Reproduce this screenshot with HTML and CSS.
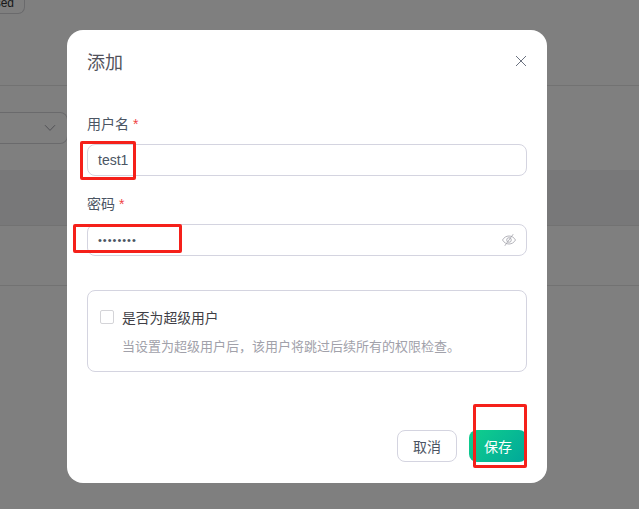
FILE: index.html
```html
<!DOCTYPE html>
<html lang="zh-CN">
<head>
    <meta charset="UTF-8">
    <title>添加</title>
    <link rel="stylesheet" href="styles.css">
</head>
<body>
    <div class="page">
        <div class="top-bar">
            <span class="tag">used</span>
        </div>
        <div class="filter-row">
            <div class="select">
                <svg class="select-arrow" viewBox="0 0 12 8"><path d="M1 1.2l5 5.2 5-5.2"/></svg>
            </div>
        </div>
        <div class="table-head"></div>
        <div class="table-row"></div>
    </div>

    <div class="overlay"></div>

    <div class="modal">
        <div class="modal-header">
            <h2 class="modal-title">添加</h2>
            <svg class="modal-close" viewBox="0 0 12 12"><path d="M1 1l10 10M11 1L1 11"/></svg>
        </div>

        <div class="form-group">
            <label class="form-label">用户名 <span class="required">*</span></label>
            <div class="input">test1</div>
        </div>
        <div class="form-group">
            <label class="form-label">密码 <span class="required">*</span></label>
            <div class="input">
                <span class="password">••••••••</span>
                <svg class="eye" viewBox="0 0 16 14">
                    <path d="M1.5 7C3 4.4 5.3 3 8 3s5 1.4 6.500 4C13 9.600 10.700 11 8 11S3 9.600 1.500 7z"/>
                    <circle cx="8" cy="7" r="2.300"/>
                    <path d="M12.200 1.200L3.800 12.800"/>
                </svg>
            </div>
        </div>

        <div class="super-box">
            <div class="super-row">
                <span class="checkbox"></span>
                <span class="super-title">是否为超级用户</span>
            </div>
            <p class="super-desc">当设置为超级用户后，该用户将跳过后续所有的权限检查。</p>
        </div>

        <div class="modal-footer">
            <a href="#" class="btn">取消</a>
            <a href="#" class="btn btn-save">保存</a>
        </div>
    </div>

    <div class="mark mark-name"></div>
    <div class="mark mark-password"></div>
    <div class="mark mark-save"></div>
</body>
</html>
```

FILE: styles.css
```css
* {
    box-sizing: border-box;
}

html, body {
    height: 100%;
}

body {
    margin: 0;
    overflow: hidden;
    font-family: "Liberation Sans", "Noto Sans CJK SC", sans-serif;
    color: #4b5563;
    background-color: #fff;
}

.page {
    height: 509px;
}

.top-bar {
    height: 86px;
    border-bottom: 1px solid #e5e5e5;
}

.tag {
    display: block;
    width: 25px;
    height: 14px;
    padding-right: 10px;
    border: 1px solid #d4d4d8;
    border-top: none;
    border-left: none;
    border-radius: 0 0 7px 0;
    overflow: hidden;
    font-size: 12px;
    line-height: 6px;
    direction: rtl;
    color: #333;
}

.filter-row {
    height: 84px;
    padding-top: 26px;
}

.select {
    display: flex;
    align-items: center;
    justify-content: flex-end;
    width: 68px;
    height: 32px;
    padding-right: 11px;
    border: 1px solid #d4d4d8;
    border-left: none;
    border-radius: 0 8px 8px 0;
}

.select-arrow {
    width: 12px;
    height: 8px;
    fill: none;
    stroke: #a1a1aa;
    stroke-width: 1;
}

.table-head {
    height: 56px;
    background-color: #f0f1f3;
    border-bottom: 1px solid #e5e5e5;
}

.table-row {
    height: 60px;
    border-bottom: 1px solid #e5e5e5;
}

.overlay {
    position: absolute;
    inset: 0;
    background-color: rgba(0, 0, 0, 0.5);
}

.modal {
    position: absolute;
    top: 30px;
    left: 67px;
    width: 480px;
    height: 453px;
    padding: 20px;
    background-color: #fff;
    border-radius: 16px;
}

.modal-header {
    display: flex;
    align-items: center;
    justify-content: space-between;
    height: 22px;
    margin-bottom: 30px;
}

.modal-title {
    margin: 0;
    font-size: 18px;
    font-weight: 400;
    color: #52525b;
}

.modal-close {
    width: 12px;
    height: 12px;
    fill: none;
    stroke: #6b7280;
    stroke-width: 1;
}

.form-group {
    margin-bottom: 6px;
}

.form-label {
    display: block;
    height: 42px;
    padding-top: 12px;
    font-size: 14px;
    line-height: 20px;
    color: #4b5563;
}

.required {
    color: #ef4444;
}

.input {
    display: flex;
    align-items: center;
    justify-content: space-between;
    height: 32px;
    padding: 0 10px;
    border: 1px solid #d4d4e0;
    border-radius: 8px;
    font-size: 14px;
    color: #4b5563;
}

.password {
    font-size: 11px;
    letter-spacing: 1px;
}

.eye {
    width: 16px;
    height: 14px;
    margin-right: -1px;
    fill: none;
    stroke: #a1a1aa;
    stroke-width: 0.800;
}

.super-box {
    height: 82px;
    margin-top: 34px;
    padding: 16px 12px;
    border: 1px solid #d4d4e0;
    border-radius: 8px;
}

.super-row {
    display: flex;
    align-items: center;
    gap: 8px;
    height: 20px;
}

.checkbox {
    width: 14px;
    height: 14px;
    border: 1px solid #d4d4d8;
    border-radius: 2px;
}

.super-title {
    font-size: 13.800px;
    color: #3f3f46;
}

.super-desc {
    margin: 10px 0 0 22px;
    font-size: 13px;
    line-height: 20px;
    color: #a1a1aa;
}

.modal-footer {
    display: flex;
    justify-content: flex-end;
    gap: 12px;
    margin-top: 58px;
}

.btn {
    display: flex;
    align-items: center;
    justify-content: center;
    width: 60px;
    height: 32px;
    border: 1px solid #d4d4e0;
    border-radius: 8px;
    font-size: 14px;
    color: #4b5563;
    text-decoration: none;
}

.btn-save {
    width: 58px;
    border: none;
    background: linear-gradient(135deg, #10d08c, #00a79a);
    color: #fff;
}

/* red boxes drawn over the screenshot */
.mark {
    position: absolute;
    border: 3px solid #f5201a;
    border-radius: 2px;
}

.mark-name {
    top: 141px;
    left: 80px;
    width: 56px;
    height: 39px;
}

.mark-password {
    top: 224px;
    left: 73px;
    width: 109px;
    height: 29px;
}

.mark-save {
    top: 404px;
    left: 473px;
    width: 54px;
    height: 64px;
}
```
